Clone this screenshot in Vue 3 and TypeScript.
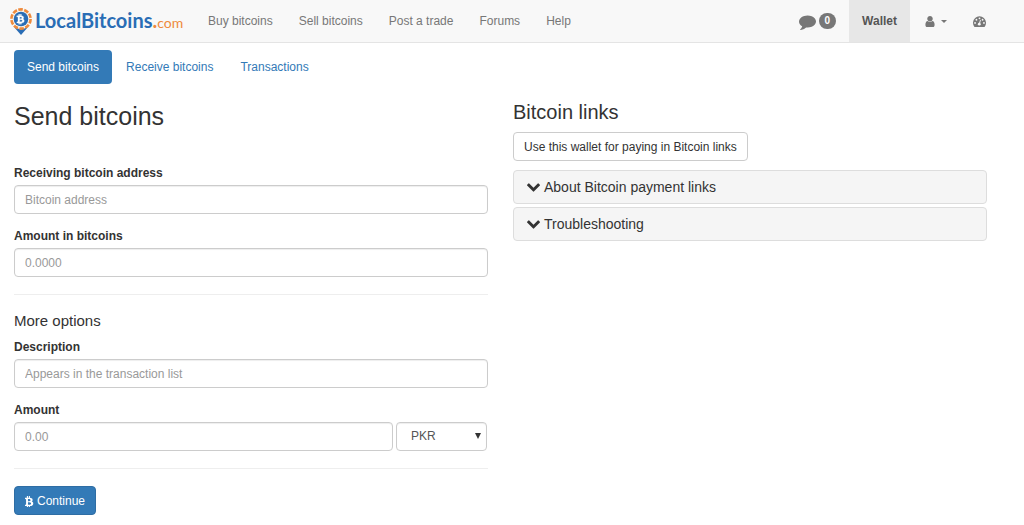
<script setup lang="ts">
import { ref } from 'vue'

const mainLinks: string[] = ['Buy bitcoins', 'Sell bitcoins', 'Post a trade', 'Forums', 'Help']
const tabs: string[] = ['Send bitcoins', 'Receive bitcoins', 'Transactions']
const panels: string[] = ['About Bitcoin payment links', 'Troubleshooting']

const activeTab = ref<string>('Send bitcoins')
const address = ref<string>('')
const amountBtc = ref<string>('')
const description = ref<string>('')
const amount = ref<string>('')
const currency = ref<string>('PKR')

const btcPath =
  'M1322 637q18 182-131 258 117 28 175 103t45 214q-7 71-32.5 125t-64.5 89-97 58.5-121.5 34.5-145.5 15v255h-154v-251q-80 0-122-1v252h-154v-255q-18 0-54-.5t-55-.5h-200l31-183h111q50 0 58-51v-402h16q-6-1-16-1v-287q-13-68-89-68h-111v-164l212 1q64 0 97-1v-252h154v247q82-2 122-2v-245h154v252q79 7 140 22.5t113 45 82.5 78 36.5 114.5zm-215 545q0-36-15-64t-37-46-57.5-30.5-65.5-18.5-74-9-69-3-64.5 1-47.5 1v338q8 0 37 .5t48 .5 53-1.5 58.5-4 57-8.5 55.5-14 47.5-21 39.5-30 24.5-40 9.5-51zm-71-476q0-33-12.5-58.5t-30.5-42-48-28-55-16.5-61.5-8-58-2.5-54 1-39.5.5v307q5 0 34.5.5t46.5 0 50-2 55-5.5 51.5-11 48.5-18.5 37-27 27-38.5 9-51z'
</script>

<template>
  <div class="page">
    <header class="navbar">
      <a class="brand" href="#">
        <svg class="pin" viewBox="0 0 24 28" aria-hidden="true">
          <path d="M5 20 L12 28 L19 20 Q12 24 5 20z" fill="#2a6db5" />
          <circle cx="12" cy="12" r="9.6" fill="#fbf3ea" stroke="#ee8a3c" stroke-width="2.6" stroke-dasharray="4.6 1.43" />
          <circle cx="12" cy="12" r="7.3" fill="#2a6db5" />
          <svg x="6.5" y="6.5" width="11" height="11" viewBox="0 0 1792 1792">
            <path :d="btcPath" fill="#fff" stroke="#fff" stroke-width="60" />
          </svg>
        </svg>
        <span class="brand-name">LocalBitcoins<span class="brand-dot">.</span><span class="brand-tld">com</span></span>
      </a>
      <nav class="main-nav">
        <a v-for="link in mainLinks" :key="link" class="nav-link" href="#">{{ link }}</a>
      </nav>
      <nav class="user-nav">
        <a class="nav-link messages" href="#" aria-label="Messages">
          <svg class="icon-chat" viewBox="0 0 1792 1792" aria-hidden="true">
            <path
              d="M1792 896q0 174-120 321.5t-326 233-450 85.5q-70 0-145-8-198 175-460 242-49 14-114 22-17 2-30.5-9t-17.5-29v-1q-3-4-.5-12t2-10 4.5-9.5l6-9 7-8.5 8-9q7-8 31-34.5t34.5-38 31-39.5 32.5-51 27-59 26-76q-157-89-247.5-220t-90.5-281q0-130 71-248.5t191-204.5 286-136.5 348-50.5q244 0 450 85.5t326 233 120 321.5z"
            />
          </svg>
          <span class="badge">0</span>
        </a>
        <a class="nav-link wallet" href="#">Wallet</a>
        <a class="nav-link account" href="#" aria-label="Account">
          <svg class="icon-user" viewBox="256 128 1280 1536" aria-hidden="true">
            <path
              d="M1536 1399q0 109-62.5 187t-150.5 78h-854q-88 0-150.5-78t-62.5-187q0-85 8.5-160.5t31.5-152 58.5-131 94-89 134.5-34.5q131 128 313 128t313-128q76 0 134.5 34.5t94 89 58.5 131 31.5 152 8.5 160.5zm-256-887q0 159-112.5 271.5t-271.5 112.5-271.5-112.5-112.5-271.5 112.5-271.5 271.5-112.5 271.5 112.5 112.5 271.5z"
            />
          </svg>
          <svg class="icon-caret" viewBox="0 0 6 3" aria-hidden="true"><path d="M0 0h6L3 3z" /></svg>
        </a>
        <a class="nav-link" href="#" aria-label="Dashboard">
          <svg class="icon-dash" viewBox="0 0 24 20" aria-hidden="true">
            <path d="M2.4 19.5A12 12 0 1 1 21.6 19.5Q21.3 20 20.6 20H3.4Q2.7 20 2.4 19.5z" />
            <g fill="#f8f8f8">
              <circle cx="3.8" cy="12.6" r="1.7" />
              <circle cx="6.3" cy="6.8" r="1.7" />
              <circle cx="12" cy="4.2" r="1.7" />
              <circle cx="17.7" cy="6.8" r="1.7" />
              <circle cx="20.2" cy="12.6" r="1.7" />
              <circle cx="11.6" cy="15" r="2.6" />
              <path d="M11 14l2-7.4 1.5.4-1.7 7.4z" />
            </g>
          </svg>
        </a>
      </nav>
    </header>

    <nav class="pills">
      <a
        v-for="tab in tabs"
        :key="tab"
        class="pill"
        :class="{ active: tab === activeTab }"
        href="#"
        @click.prevent="activeTab = tab"
        >{{ tab }}</a
      >
    </nav>

    <main class="columns">
      <form class="send" @submit.prevent>
        <h1>Send bitcoins</h1>
        <div class="group">
          <label for="address">Receiving bitcoin address</label>
          <input id="address" v-model="address" class="control" type="text" placeholder="Bitcoin address" />
        </div>
        <div class="group">
          <label for="amount-btc">Amount in bitcoins</label>
          <input id="amount-btc" v-model="amountBtc" class="control" type="text" placeholder="0.0000" />
        </div>
        <hr />
        <h2>More options</h2>
        <div class="group">
          <label for="description">Description</label>
          <input
            id="description"
            v-model="description"
            class="control"
            type="text"
            placeholder="Appears in the transaction list"
          />
        </div>
        <div class="group">
          <label for="amount">Amount</label>
          <div class="amount-row">
            <input id="amount" v-model="amount" class="control" type="text" placeholder="0.00" />
            <div class="select-wrap">
              <select v-model="currency" class="control" aria-label="Currency">
                <option>PKR</option>
                <option>USD</option>
                <option>EUR</option>
              </select>
              <svg class="select-arrow" viewBox="0 0 6 6" aria-hidden="true"><path d="M0 0h6L3 6z" /></svg>
            </div>
          </div>
        </div>
        <hr />
        <button class="btn primary" type="submit">
          <svg class="icon-btc" viewBox="340 128 1100 1536" aria-hidden="true"><path :d="btcPath" /></svg>
          Continue
        </button>
      </form>

      <section class="links">
        <h2>Bitcoin links</h2>
        <button class="btn" type="button">Use this wallet for paying in Bitcoin links</button>
        <div class="panels">
          <button v-for="panel in panels" :key="panel" class="panel" type="button">
            <svg class="icon-chevron" viewBox="90 500 1612 1100" aria-hidden="true">
              <path
                d="M1683 808l-742 741q-19 19-45 19t-45-19l-742-741q-19-19-19-45.5t19-45.5l166-165q19-19 45-19t45 19l531 531 531-531q19-19 45-19t45 19l166 165q19 19 19 45.5t-19 45.5z"
              />
            </svg>
            {{ panel }}
          </button>
        </div>
      </section>
    </main>
  </div>
</template>

<style>
body {
  margin: 0;
  background: #fff;
}
</style>

<style scoped>
.page {
  font-family: 'Liberation Sans', Arial, sans-serif;
  font-size: 12px;
  line-height: 17px;
  color: #333;
}
.page * {
  box-sizing: border-box;
}
a {
  text-decoration: none;
}
svg {
  display: block;
  flex: none;
  fill: currentColor;
}
.navbar {
  display: flex;
  height: 43px;
  padding: 0 25px 0 9px;
  background: #f8f8f8;
  border-bottom: 1px solid #e4e4e4;
}
.brand {
  display: flex;
  align-items: center;
  gap: 2px;
  width: 186px;
}
.pin {
  width: 24px;
  height: 28px;
}
.brand-name {
  font-family: Lato, 'Liberation Sans', sans-serif;
  font-size: 20px;
  font-weight: 700;
  line-height: 24px;
  color: #2a6db5;
  white-space: nowrap;
}
.brand-dot {
  color: #ee8a3c;
}
.brand-tld {
  font-size: 14px;
  font-weight: 400;
  color: #ee8a3c;
}
.main-nav,
.user-nav {
  display: flex;
}
.user-nav {
  margin-left: auto;
}
.nav-link {
  display: flex;
  align-items: center;
  padding: 0 13px;
  color: #777;
  white-space: nowrap;
}
.messages {
  gap: 3px;
}
.icon-chat {
  width: 17px;
  height: 17px;
}
.badge {
  padding: 0 6px;
  border-radius: 8px;
  background: #777;
  color: #fff;
  font-size: 10px;
  font-weight: 700;
  line-height: 16px;
}
.wallet {
  background: #e7e7e7;
  color: #555;
  font-weight: 700;
}
.account {
  gap: 6px;
  padding-left: 15px;
}
.icon-user {
  width: 10px;
  height: 11px;
}
.icon-caret {
  width: 6px;
  height: 3px;
}
.icon-dash {
  width: 13px;
  height: 11px;
}
.pills {
  display: flex;
  gap: 1px;
  padding: 7px 14px 0;
}
.pill {
  padding: 9px 13px 8px;
  border-radius: 4px;
  color: #337ab7;
}
.pill.active {
  background: #337ab7;
  color: #fff;
}
.columns {
  display: grid;
  grid-template-columns: 1fr 1fr;
  gap: 25px;
  padding: 0 37px 10px 14px;
}
h1,
h2 {
  margin: 0;
  font-weight: 400;
}
h1 {
  margin: 17px 0 34px;
  font-size: 25px;
  line-height: 30px;
}
.send h2 {
  margin-bottom: 9px;
  font-size: 15px;
  line-height: 18px;
}
.group {
  margin-bottom: 14px;
}
label {
  display: block;
  margin-bottom: 3px;
  font-weight: 700;
}
.control {
  display: block;
  width: 100%;
  height: 29px;
  padding: 0 10px;
  border: 1px solid #ccc;
  border-radius: 4px;
  background: #fff;
  box-shadow: inset 0 1px 1px rgba(0, 0, 0, 0.07);
  color: #555;
  font: inherit;
}
.control::placeholder {
  color: #999;
  opacity: 1;
}
hr {
  margin: 17px 0;
  border: 0;
  border-top: 1px solid #eee;
}
.amount-row {
  display: flex;
  gap: 3px;
  padding-right: 1px;
}
.amount-row > .control {
  flex: 1;
  min-width: 0;
}
.select-wrap {
  position: relative;
  width: 91px;
}
select.control {
  appearance: none;
  padding-left: 14px;
}
.select-arrow {
  position: absolute;
  top: 11px;
  right: 6px;
  width: 6px;
  height: 6px;
  pointer-events: none;
}
.btn {
  display: flex;
  align-items: center;
  gap: 3px;
  height: 29px;
  padding: 1px 10px 0;
  border: 1px solid #ccc;
  border-radius: 4px;
  background: #fff;
  color: #333;
  font: inherit;
  cursor: pointer;
}
.btn.primary {
  border-color: #2e6da4;
  background: #337ab7;
  color: #fff;
}
.icon-btc {
  width: 9px;
  height: 11px;
}
.links h2 {
  margin: 16px 0 8px;
  font-size: 20px;
  line-height: 24px;
}
.panels {
  display: grid;
  gap: 3px;
  margin-top: 9px;
}
.panel {
  display: flex;
  align-items: center;
  gap: 4px;
  height: 34px;
  padding: 0 13px;
  border: 1px solid #ddd;
  border-radius: 4px;
  background: #f5f5f5;
  color: #333;
  font: inherit;
  font-size: 14px;
  text-align: left;
  cursor: pointer;
}
.icon-chevron {
  width: 13px;
  height: 9px;
}
</style>
